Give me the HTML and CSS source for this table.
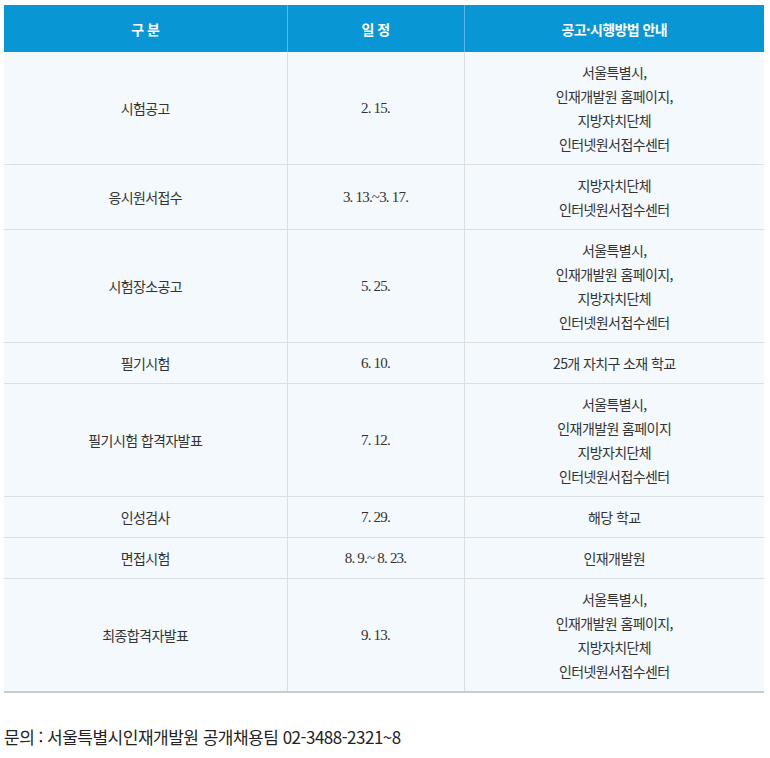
FILE: index.html
```html
<!DOCTYPE html>
<html lang="ko">
<head>
<meta charset="utf-8">
<link rel="stylesheet" href="styles.css">
</head>
<body>
<table class="sched">
  <colgroup>
    <col class="c1"><col class="c2"><col class="c3">
  </colgroup>
  <thead>
    <tr><th>구 분</th><th>일 정</th><th>공고·시행방법 안내</th></tr>
  </thead>
  <tbody>
    <tr><td>시험공고</td><td class="num">2. 15.</td><td>서울특별시,<br>인재개발원 홈페이지,<br>지방자치단체<br>인터넷원서접수센터</td></tr>
    <tr><td>응시원서접수</td><td class="num">3. 13.~3. 17.</td><td>지방자치단체<br>인터넷원서접수센터</td></tr>
    <tr><td>시험장소공고</td><td class="num">5. 25.</td><td>서울특별시,<br>인재개발원 홈페이지,<br>지방자치단체<br>인터넷원서접수센터</td></tr>
    <tr><td>필기시험</td><td class="num">6. 10.</td><td>25개 자치구 소재 학교</td></tr>
    <tr><td>필기시험 합격자발표</td><td class="num">7. 12.</td><td>서울특별시,<br>인재개발원 홈페이지<br>지방자치단체<br>인터넷원서접수센터</td></tr>
    <tr><td>인성검사</td><td class="num">7. 29.</td><td>해당 학교</td></tr>
    <tr><td>면접시험</td><td class="num">8. 9.~ 8. 23.</td><td>인재개발원</td></tr>
    <tr><td>최종합격자발표</td><td class="num">9. 13.</td><td>서울특별시,<br>인재개발원 홈페이지,<br>지방자치단체<br>인터넷원서접수센터</td></tr>
  </tbody>
</table>
<p class="contact">문의 : 서울특별시인재개발원 공개채용팀 02-3488-2321~8</p>
</body>
</html>
```
FILE: styles.css
```css
html, body {
  margin: 0;
  background: #ffffff;
}
body {
  padding: 5px 6px 0 4px;
  font-family: "Noto Sans CJK KR", "Noto Sans", sans-serif;
  color: #333333;
}
.sched {
  width: 760px;
  border-collapse: collapse;
  table-layout: fixed;
  font-size: 14px;
  letter-spacing: -0.6px;
}
.c1 { width: 283px; }
.c2 { width: 177px; }
.c3 { width: 300px; }
.sched th {
  background: #0896d4;
  color: #ffffff;
  font-weight: bold;
  height: 47px;
  padding: 0;
  border-left: 1px solid #5bb8e6;
  text-align: center;
  vertical-align: middle;
}
.sched th:first-child { border-left: none; }
.sched td {
  background: #f3f9fd;
  text-align: center;
  vertical-align: middle;
  line-height: 24px;
  padding: 8px 0;
  border-top: 1px solid #dcdfe2;
  border-left: 1px solid #dcdfe2;
}
.sched tbody tr:first-child td { border-top: none; }
.sched td:first-child { border-left: none; }
.sched tbody tr:last-child td { border-bottom: 2px solid #c9ccd0; }
.sched td.num {
  font-family: "Liberation Serif", "Noto Sans CJK KR", serif;
  font-size: 15px;
  letter-spacing: -0.8px;
}
.contact {
  margin: 32px 0 0 0;
  font-size: 17px;
  line-height: 24px;
  letter-spacing: -0.5px;
  color: #222222;
}
```
